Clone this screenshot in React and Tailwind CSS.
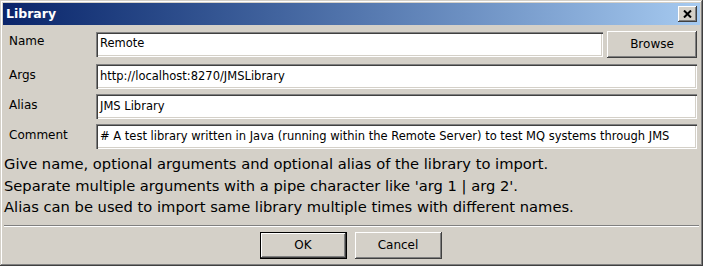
import React from "react";

const sunken =
  "shadow-[inset_1px_1px_#808080,inset_2px_2px_#404040,inset_-1px_-1px_#ffffff,inset_-2px_-2px_#d4d0c8]";
const raised =
  "shadow-[inset_-1px_-1px_#404040,inset_1px_1px_#ffffff,inset_-2px_-2px_#808080,inset_2px_2px_#d4d0c8]";

function Field({ label, value, className = "" }) {
  return (
    <div className={"flex items-center h-[25px] " + className}>
      <div className="w-[87px] pb-[3px] text-[12px] text-black">{label}</div>
      <div
        className={
          "flex-1 h-[25px] bg-white flex items-center pl-[4px] text-[11.5px] text-black whitespace-nowrap overflow-hidden " +
          sunken
        }
      >
        {value}
      </div>
    </div>
  );
}

export default function App() {
  return (
    <div
      className="w-[703px] h-[266px] bg-[#d4d0c8] p-[3px] flex flex-col shadow-[inset_-1px_-1px_#404040,inset_1px_1px_#d4d0c8,inset_-2px_-2px_#808080,inset_2px_2px_#ffffff]"
      style={{ fontFamily: '"DejaVu Sans", Verdana, sans-serif' }}
    >
      {/* Title bar */}
      <div className="h-[22px] flex items-center justify-between pl-[3px] pr-[3px] bg-gradient-to-r from-[#0a246a] to-[#a6caf0]">
        <span className="text-white font-bold text-[12.5px] leading-none">Library</span>
        <div className={"w-[19px] h-[16px] bg-[#d4d0c8] flex items-center justify-center " + raised}>
          <svg width="9" height="8" viewBox="0 0 9 8">
            <path d="M1 0.5 L8 7.5 M8 0.5 L1 7.5" stroke="#000" strokeWidth="2" />
          </svg>
        </div>
      </div>

      {/* Form */}
      <div className="flex flex-col pl-[6px] pr-[3px] pt-[5px]">
        <div className="flex items-center h-[28px]">
          <div className="w-[87px] pb-[6px] text-[12px] text-black">Name</div>
          <div
            className={
              "flex-1 h-[25px] bg-white flex items-center pl-[4px] text-[11.5px] text-black " + sunken
            }
          >
            Remote
          </div>
          <div
            className={
              "ml-[4px] w-[90px] h-[27px] bg-[#d4d0c8] flex items-center justify-center text-[12px] text-black " +
              raised
            }
          >
            Browse
          </div>
        </div>
        <Field label="Args" value="http://localhost:8270/JMSLibrary" className="mt-[6px]" />
        <Field label="Alias" value="JMS Library" className="mt-[5px]" />
        <Field
          label="Comment"
          value="# A test library written in Java (running within the Remote Server) to test MQ systems through JMS"
          className="mt-[5px]"
        />
      </div>

      <div className="mt-[4px] pl-[1px] text-[14.7px] leading-[21.5px] text-black">
        <div>Give name, optional arguments and optional alias of the library to import.</div>
        <div>Separate multiple arguments with a pipe character like 'arg 1 | arg 2'.</div>
        <div>Alias can be used to import same library multiple times with different names.</div>
      </div>

      <div className="mt-[7px] mx-[1px] h-[2px] border-t border-t-[#808080] border-b border-b-white" />

      <div className="mt-[5px] flex justify-center gap-[8px] pr-[2px]">
        <div className="w-[87px] h-[27px] border border-black">
          <div
            className={
              "w-full h-full bg-[#d4d0c8] flex items-center justify-center text-[12px] text-black " + raised
            }
          >
            OK
          </div>
        </div>
        <div
          className={
            "w-[87px] h-[27px] bg-[#d4d0c8] flex items-center justify-center text-[12px] text-black " + raised
          }
        >
          Cancel
        </div>
      </div>
    </div>
  );
}
